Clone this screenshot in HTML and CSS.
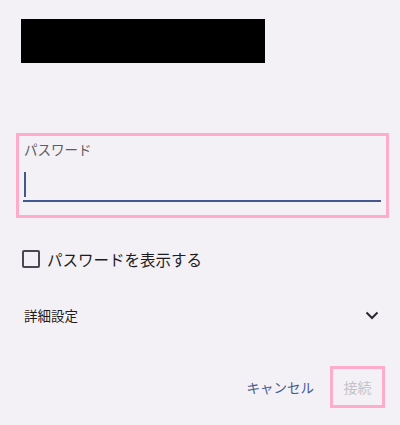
FILE: index.html
```html
<!DOCTYPE html>
<html lang="ja">
<head>
    <meta charset="UTF-8">
    <meta name="viewport" content="width=device-width, initial-scale=1.0">
    <title>Wi-Fi</title>
    <link rel="stylesheet" href="styles.css">
</head>
<body>

<div class="dialog">
    <!-- network name (redacted) -->
    <div class="title-block"></div>

    <div class="field">
        <label class="field-label" for="pw">パスワード</label>
        <div class="field-input">
            <span class="cursor"></span>
        </div>
    </div>

    <div class="check-row">
        <span class="checkbox"></span>
        <span class="check-text">パスワードを表示する</span>
    </div>

    <div class="advanced-row">
        <span>詳細設定</span>
        <svg class="chevron" width="14" height="9" viewBox="0 0 14 9">
            <path d="M1.5 1.5 L7 7 L12.5 1.5" fill="none" stroke="#2b2930" stroke-width="2"/>
        </svg>
    </div>

    <div class="actions">
        <button class="btn btn-cancel">キャンセル</button>
        <button class="btn btn-connect" disabled>接続</button>
    </div>
</div>

</body>
</html>
```

FILE: styles.css
```css
body {
    margin: 0;
    padding: 0;
    background-color: #f3f1f6;
    font-family: Roboto, "Noto Sans CJK JP", sans-serif;
}
.dialog {
    padding-top: 19px;
}
.title-block {
    margin-left: 21px;
    width: 244px;
    height: 44px;
    background-color: #000;
}
.field {
    margin: 70px 11px 0 16px;
    height: 79px;
    border: 3px solid #ffabc9;
    padding: 0 5px 0 4px;
}
.field-label {
    display: block;
    margin-top: 4px;
    margin-left: 1px;
    font-size: 13.5px;
    line-height: 20px;
    color: #5d5b63;
}
.field-input {
    margin-top: 12px;
    height: 28px;
    border-bottom: 2px solid #44578e;
    display: flex;
    align-items: flex-start;
}
.cursor {
    display: block;
    margin-left: 1px;
    width: 2px;
    height: 25px;
    background-color: #44578e;
}
.check-row {
    display: flex;
    align-items: center;
    margin: 29px 0 0 22px;
    height: 24px;
}
.checkbox {
    box-sizing: border-box;
    width: 18px;
    height: 18px;
    border: 2px solid #4a4850;
    border-radius: 2px;
}
.check-text {
    margin-left: 7px;
    font-size: 15.5px;
    color: #1d1b20;
}
.advanced-row {
    display: flex;
    align-items: center;
    justify-content: space-between;
    margin: 32px 21px 0 24px;
    height: 24px;
    font-size: 13.5px;
    color: #1d1b20;
}
.chevron {
    display: block;
}
.actions {
    display: flex;
    justify-content: flex-end;
    align-items: center;
    margin: 39px 15px 0 0;
}
.btn {
    font-family: Roboto, "Noto Sans CJK JP", sans-serif;
    font-size: 14px;
    background: none;
    border: none;
    padding: 0;
    cursor: pointer;
}
.btn-cancel {
    color: #485a8f;
    font-size: 13.5px;
    margin-right: 16px;
}
.btn-connect {
    box-sizing: border-box;
    width: 55px;
    height: 42px;
    border: 3px solid #ffabc9;
    color: #c4c2c9;
}
```
